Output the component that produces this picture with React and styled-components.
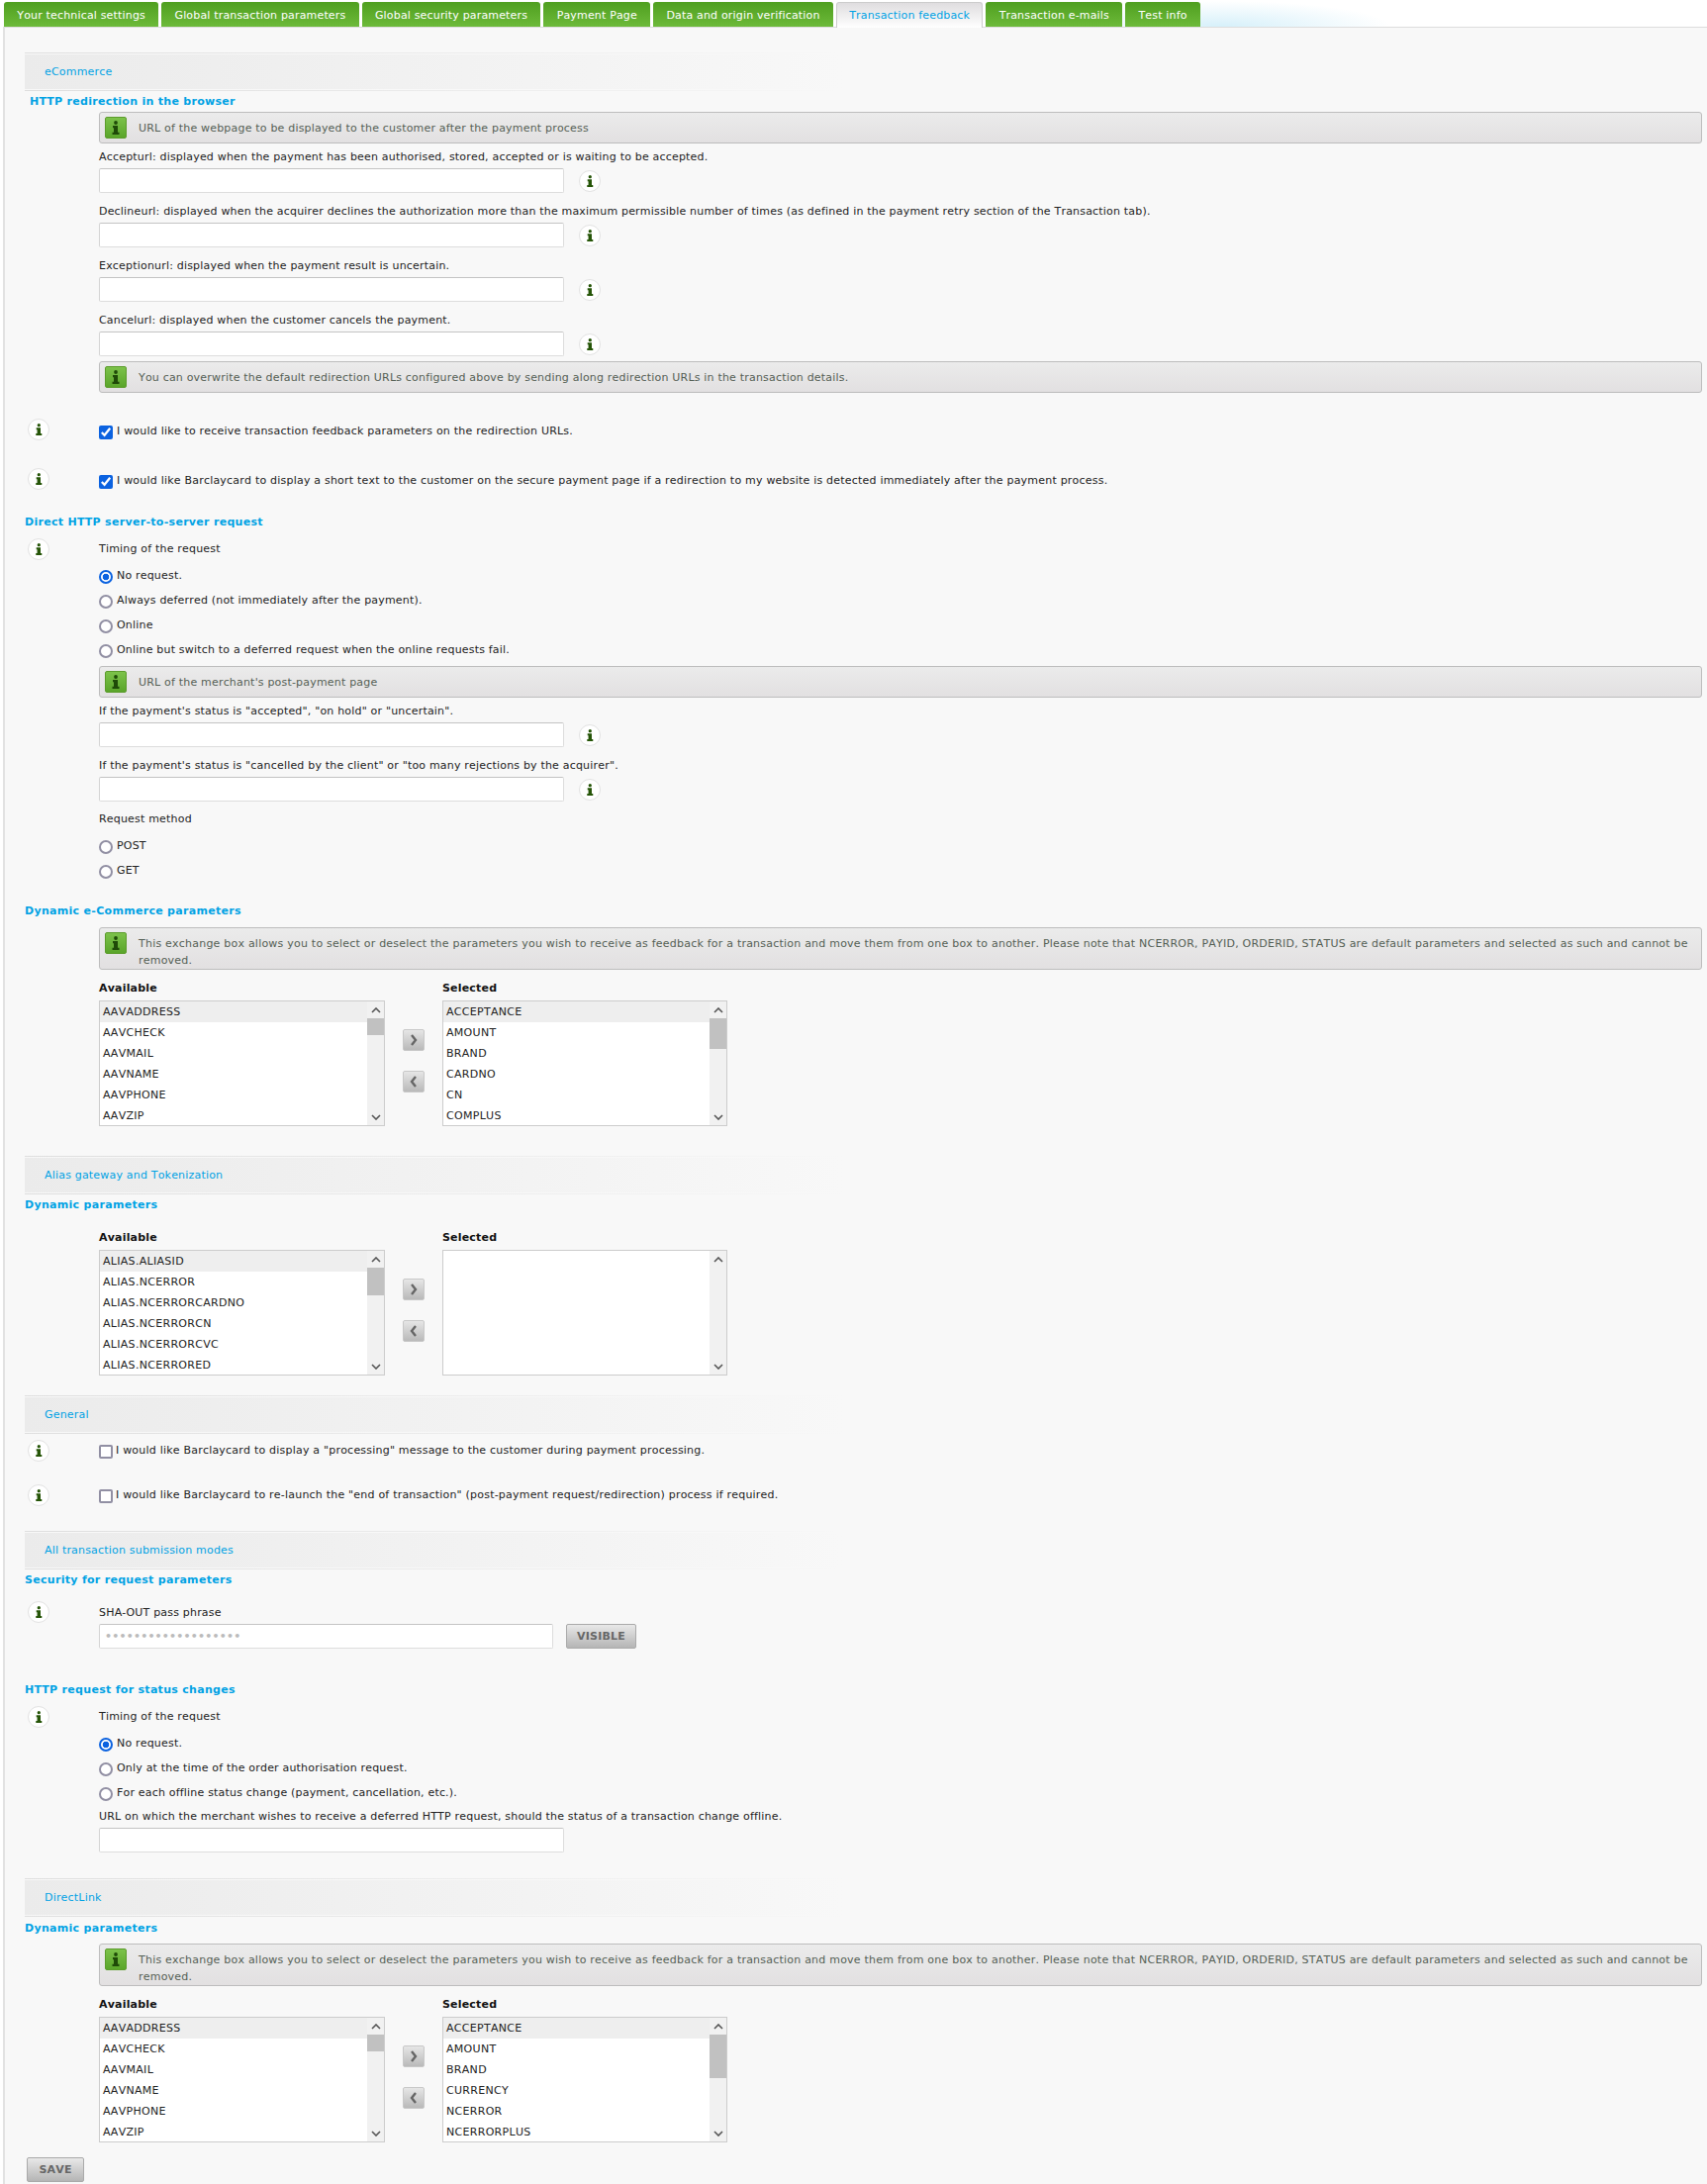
import React from "react";
import styled, { createGlobalStyle } from "styled-components";

const GlobalStyle = createGlobalStyle`
  body {
    margin: 0;
    background: #fff;
    font-family: "DejaVu Sans", Verdana, sans-serif;
    font-size: 11px;
    font-kerning: none;
    letter-spacing: 0.19px;
    color: #222;
  }
`;

const tabs = [
  "Your technical settings",
  "Global transaction parameters",
  "Global security parameters",
  "Payment Page",
  "Data and origin verification",
  "Transaction feedback",
  "Transaction e-mails",
  "Test info",
];

const available = ["AAVADDRESS", "AAVCHECK", "AAVMAIL", "AAVNAME", "AAVPHONE", "AAVZIP"];
const selectedOne = ["ACCEPTANCE", "AMOUNT", "BRAND", "CARDNO", "CN", "COMPLUS"];
const aliasAvailable = [
  "ALIAS.ALIASID",
  "ALIAS.NCERROR",
  "ALIAS.NCERRORCARDNO",
  "ALIAS.NCERRORCN",
  "ALIAS.NCERRORCVC",
  "ALIAS.NCERRORED",
];
const selectedLink = ["ACCEPTANCE", "AMOUNT", "BRAND", "CURRENCY", "NCERROR", "NCERRORPLUS"];

const exchangeNote =
  "This exchange box allows you to select or deselect the parameters you wish to receive as feedback for a transaction and move them from one box to another. Please note that NCERROR, PAYID, ORDERID, STATUS are default parameters and selected as such and cannot be removed.";

const InfoGlyph = ({ size = 14 }) => (
  <svg width={(size * 10) / 14} height={size} viewBox="0 0 10 14">
    <circle cx="5" cy="2" r="1.9" fill="currentColor" />
    <path d="M2 5h5v6.8h1.5V14h-7v-2.2H3V7.2H2z" fill="currentColor" />
  </svg>
);

const Dot = () => (
  <DotWrap>
    <InfoGlyph size={12} />
  </DotWrap>
);

const Notice = ({ wide, children }) => (
  <NoticeBox>
    <NoticeIcon>
      <InfoGlyph size={14} />
    </NoticeIcon>
    <NoticeText $wide={wide}>{children}</NoticeText>
  </NoticeBox>
);

const Field = ({ label }) => (
  <FieldWrap>
    <Label>{label}</Label>
    <FieldRow>
      <TextInput type="text" />
      <Dot />
    </FieldRow>
  </FieldWrap>
);

const CheckRow = ({ checked, top, compact, children }) => (
  <CheckWrap $top={top}>
    <Dot />
    <CheckLabel $compact={compact}>
      <CheckBox type="checkbox" defaultChecked={checked} $compact={compact} />
      <span>{children}</span>
    </CheckLabel>
  </CheckWrap>
);

const Radios = ({ name, options, first }) => (
  <RadioList>
    {options.map((o, i) => (
      <RadioLabel key={o}>
        <RadioButton type="radio" name={name} defaultChecked={first && i === 0} />
        <span>{o}</span>
      </RadioLabel>
    ))}
  </RadioList>
);

const Chevron = ({ dir }) => (
  <svg width="10" height="6" viewBox="0 0 10 6">
    <path
      d={dir === "up" ? "M1 5l4-4 4 4" : "M1 1l4 4 4-4"}
      fill="none"
      stroke="#555"
      strokeWidth="1.6"
    />
  </svg>
);

const ListBox = ({ items, thumb, width }) => (
  <List $width={width}>
    <Options>
      {items.map((o, i) => (
        <Option key={o} $first={i === 0}>
          {o}
        </Option>
      ))}
    </Options>
    <Scrollbar>
      <ScrollArrow>
        <Chevron dir="up" />
      </ScrollArrow>
      <ScrollTrack>{thumb > 0 && <ScrollThumb style={{ height: thumb }} />}</ScrollTrack>
      <ScrollArrow>
        <Chevron dir="down" />
      </ScrollArrow>
    </Scrollbar>
  </List>
);

const MoveButton = ({ points }) => (
  <Move>
    <svg width="10" height="14" viewBox="0 0 10 14">
      <path d={points} fill="none" stroke="#666" strokeWidth="2.4" />
    </svg>
  </Move>
);

const Exchange = ({ top, left, right, leftThumb, rightThumb }) => (
  <ExchangeWrap $top={top}>
    <ExchangeHeads>
      <ColumnTitle>Available</ColumnTitle>
      <ColumnTitle>Selected</ColumnTitle>
    </ExchangeHeads>
    <ExchangeBody>
      <ListBox items={left} thumb={leftThumb} width={289} />
      <MoveColumn>
        <MoveButton points="M3 2l4 5-4 5" />
        <MoveButton points="M7 2L3 7l4 5" />
      </MoveColumn>
      <ListBox items={right} thumb={rightThumb} width={288} />
    </ExchangeBody>
  </ExchangeWrap>
);

const App = () => {
  return (
    <>
      <GlobalStyle />
      <TabBar>
        {tabs.map((t) => (
          <Tab key={t} $active={t === "Transaction feedback"}>
            {t}
          </Tab>
        ))}
      </TabBar>
      <Panel>
        <SectionHead $top={25}>
          <SectionTitle>eCommerce</SectionTitle>
        </SectionHead>
        <Heading $top={4} $indent={5}>
          HTTP redirection in the browser
        </Heading>
        <Indented $top={3}>
          <Notice>URL of the webpage to be displayed to the customer after the payment process</Notice>
          <Field label="Accepturl: displayed when the payment has been authorised, stored, accepted or is waiting to be accepted." />
          <Field label="Declineurl: displayed when the acquirer declines the authorization more than the maximum permissible number of times (as defined in the payment retry section of the Transaction tab)." />
          <Field label="Exceptionurl: displayed when the payment result is uncertain." />
          <Field label="Cancelurl: displayed when the customer cancels the payment." />
          <Notice>
            You can overwrite the default redirection URLs configured above by sending along redirection URLs in the
            transaction details.
          </Notice>
        </Indented>
        <CheckRow checked top={26}>
          I would like to receive transaction feedback parameters on the redirection URLs.
        </CheckRow>
        <CheckRow checked top={27}>
          I would like Barclaycard to display a short text to the customer on the secure payment page if a redirection
          to my website is detected immediately after the payment process.
        </CheckRow>

        <Heading $top={25}>Direct HTTP server-to-server request</Heading>
        <DotRow $top={9}>
          <Dot />
          <DotContent>
            <Label>Timing of the request</Label>
            <Radios
              name="direct"
              first
              options={[
                "No request.",
                "Always deferred (not immediately after the payment).",
                "Online",
                "Online but switch to a deferred request when the online requests fail.",
              ]}
            />
            <Spaced $top={4}>
              <Notice>URL of the merchant's post-payment page</Notice>
            </Spaced>
            <Field label={`If the payment's status is "accepted", "on hold" or "uncertain".`} />
            <Field label={`If the payment's status is "cancelled by the client" or "too many rejections by the acquirer".`} />
            <Spaced $top={5}>
              <Label>Request method</Label>
            </Spaced>
            <Radios name="method" options={["POST", "GET"]} />
          </DotContent>
        </DotRow>

        <Heading $top={22}>Dynamic e-Commerce parameters</Heading>
        <Indented $top={9}>
          <Notice wide>{exchangeNote}</Notice>
        </Indented>
        <Exchange top={12} left={available} right={selectedOne} leftThumb={17} rightThumb={31} />

        <SectionHead $top={30}>
          <SectionTitle>Alias gateway and Tokenization</SectionTitle>
        </SectionHead>
        <Heading $top={4}>Dynamic parameters</Heading>
        <Exchange top={19} left={aliasAvailable} right={[]} leftThumb={28} rightThumb={0} />

        <SectionHead $top={20}>
          <SectionTitle>General</SectionTitle>
        </SectionHead>
        <CheckRow compact top={6}>
          I would like Barclaycard to display a "processing" message to the customer during payment processing.
        </CheckRow>
        <CheckRow compact top={22}>
          I would like Barclaycard to re-launch the "end of transaction" (post-payment request/redirection) process if
          required.
        </CheckRow>

        <SectionHead $top={24}>
          <SectionTitle>All transaction submission modes</SectionTitle>
        </SectionHead>
        <Heading $top={4}>Security for request parameters</Heading>
        <DotRow $top={14}>
          <Dot />
          <DotContent $pad={4}>
            <Label>SHA-OUT pass phrase</Label>
            <FieldRow>
              <PassInput type="password" defaultValue="0123456789012345678" />
              <GreyButton $left={13}>VISIBLE</GreyButton>
            </FieldRow>
          </DotContent>
        </DotRow>

        <Heading $top={35}>HTTP request for status changes</Heading>
        <DotRow $top={9}>
          <Dot />
          <DotContent>
            <Label>Timing of the request</Label>
            <Radios
              name="status"
              first
              options={[
                "No request.",
                "Only at the time of the order authorisation request.",
                "For each offline status change (payment, cancellation, etc.).",
              ]}
            />
            <Spaced $top={4}>
              <Label>URL on which the merchant wishes to receive a deferred HTTP request, should the status of a transaction change offline.</Label>
            </Spaced>
            <FieldRow>
              <TextInput type="text" />
            </FieldRow>
          </DotContent>
        </DotRow>

        <SectionHead $top={26}>
          <SectionTitle>DirectLink</SectionTitle>
        </SectionHead>
        <Heading $top={5}>Dynamic parameters</Heading>
        <Indented $top={8}>
          <Notice wide>{exchangeNote}</Notice>
        </Indented>
        <Exchange top={12} left={available} right={selectedLink} leftThumb={17} rightThumb={44} />

        <SaveRow>
          <GreyButton>SAVE</GreyButton>
        </SaveRow>
      </Panel>
    </>
  );
};

export default App;

const TabBar = styled.div`
  height: 25px;
  padding: 2px 0 0 4px;
  display: flex;
  gap: 3px;
  background: radial-gradient(ellipse 170px 26px at 1235px 100%, #d6f0fa, rgba(255, 255, 255, 0));
`;

const Tab = styled.div`
  height: 25px;
  box-sizing: border-box;
  padding: 0 13.25px;
  line-height: 28px;
  white-space: nowrap;
  letter-spacing: 0.17px;
  border-radius: 3px 3px 0 0;
  color: ${(p) => (p.$active ? "#00a2e4" : "#fff")};
  background: ${(p) =>
    p.$active ? "linear-gradient(#dfdddf, #fff)" : "linear-gradient(#4f9f1f, #6dba3a)"};
  ${(p) =>
    p.$active &&
    `
    border: 1px solid #ccc;
    border-bottom: none;
    height: 26px;
    padding: 0 12.25px;
    line-height: 26px;
    position: relative;
    z-index: 1;
  `}
`;

const Panel = styled.div`
  border-top: 1px solid #ddd;
  border-left: 2px solid #e2e2e2;
  margin-left: 3px;
  height: 2180px;
  box-sizing: border-box;
  padding: 0 5px 0 20px;
  background: #f8f8f8;
`;

const SectionHead = styled.div`
  margin-top: ${(p) => p.$top}px;
  width: 828px;
  padding: 1px 0;
  border-top: 1px solid;
  border-bottom: 1px solid;
  border-image: linear-gradient(90deg, #dedede, #f8f8f8) 1;
`;

const SectionTitle = styled.div`
  height: 35px;
  line-height: 35px;
  padding-left: 20px;
  color: #00a2e4;
  background: linear-gradient(90deg, #ebebeb, #f8f8f8);
`;

const Heading = styled.div`
  margin-top: ${(p) => p.$top}px;
  margin-left: ${(p) => p.$indent || 0}px;
  height: 14px;
  line-height: 14px;
  font-weight: bold;
  letter-spacing: 0.3px;
  color: #00a2e4;
`;

const Indented = styled.div`
  margin-top: ${(p) => p.$top}px;
  margin-left: 75px;
`;

const Spaced = styled.div`
  margin-top: ${(p) => p.$top}px;
`;

const NoticeBox = styled.div`
  box-sizing: border-box;
  min-height: 32px;
  display: flex;
  align-items: flex-start;
  padding: 4px 5px 0 5px;
  border: 1px solid #bdbdbd;
  border-radius: 3px;
  background: linear-gradient(#ebebeb, #e2e0e1);
`;

const NoticeIcon = styled.div`
  flex: none;
  width: 22px;
  height: 22px;
  display: flex;
  align-items: center;
  justify-content: center;
  box-sizing: border-box;
  border: 1px solid #5c9c2c;
  border-radius: 2px;
  color: #1f4a08;
  background: linear-gradient(#7cc24a, #5aa52a);
`;

const NoticeText = styled.div`
  margin-left: 12px;
  padding-top: 3px;
  line-height: 17px;
  letter-spacing: ${(p) => (p.$wide ? 0.22 : 0.19)}px;
  color: #556055;
`;

const FieldWrap = styled.div`
  padding: 6px 0 5px;
`;

const Label = styled.div`
  height: 14px;
  line-height: 15px;
  white-space: nowrap;
`;

const FieldRow = styled.div`
  margin-top: 5px;
  display: flex;
  align-items: center;
`;

const TextInput = styled.input`
  width: 470px;
  height: 25px;
  box-sizing: border-box;
  margin: 0;
  padding: 0 5px;
  background: #fff;
  border: 1px solid #ddd;
  border-top-color: #c4c4c4;
  border-left-color: #d4d4d4;
  border-radius: 2px;
  outline: none;
`;

const PassInput = styled(TextInput)`
  width: 459px;
  font-family: "DejaVu Sans", sans-serif;
  font-size: 11px;
  font-weight: bold;
  letter-spacing: 0.2px;
  color: #bbb;
`;

const DotWrap = styled.div`
  flex: none;
  width: 22px;
  height: 22px;
  margin-left: 15px;
  display: flex;
  align-items: center;
  justify-content: center;
  box-sizing: border-box;
  border: 1px solid #e2e2e2;
  border-radius: 50%;
  background: #fff;
  color: #265508;
`;

const CheckWrap = styled.div`
  margin-top: ${(p) => p.$top}px;
  height: 23px;
  display: flex;
  margin-left: -12px;
`;

const CheckLabel = styled.label`
  margin-left: 50px;
  display: flex;
  padding-top: ${(p) => (p.$compact ? 3 : 5)}px;
  line-height: 15px;
  letter-spacing: 0.21px;
  white-space: nowrap;
`;

const CheckBox = styled.input`
  flex: none;
  box-sizing: border-box;
  width: 14px;
  height: 14px;
  margin: 2px ${(p) => (p.$compact ? 3 : 4)}px 0 0;
  accent-color: #0b62e0;

  &:not(:checked) {
    appearance: none;
    background: #fff;
    border: 2px solid #918fa3;
    border-radius: 2px;
  }
`;

const DotRow = styled.div`
  margin-top: ${(p) => p.$top}px;
  margin-left: -12px;
  display: flex;
  align-items: flex-start;
`;

const DotContent = styled.div`
  flex: 1;
  min-width: 0;
  margin-left: 50px;
  padding-top: ${(p) => p.$pad || 3}px;
`;

const RadioList = styled.div`
  margin-top: 8px;
`;

const RadioLabel = styled.label`
  height: 25px;
  display: flex;
  align-items: center;
`;

const RadioButton = styled.input`
  appearance: none;
  flex: none;
  box-sizing: border-box;
  width: 14px;
  height: 14px;
  margin: 3px 4px 0 0;
  border: 2px solid #918fa3;
  border-radius: 50%;
  background: #fff;

  &:checked {
    border-color: #0b62e0;
    background: radial-gradient(circle, #0b62e0 0 3px, #fff 3.6px);
  }
`;

const ExchangeWrap = styled.div`
  margin-top: ${(p) => p.$top}px;
  margin-left: 75px;
`;

const ExchangeHeads = styled.div`
  display: flex;
  height: 14px;
  margin-bottom: 5px;
`;

const ColumnTitle = styled.div`
  width: 347px;
  line-height: 14px;
  font-weight: bold;
  color: #111;
`;

const ExchangeBody = styled.div`
  display: flex;
  align-items: stretch;
`;

const List = styled.div`
  box-sizing: border-box;
  width: ${(p) => p.$width}px;
  height: 127px;
  display: flex;
  border: 1px solid #ccc;
  background: #fff;
`;

const Options = styled.div`
  flex: 1;
  overflow: hidden;
`;

const Option = styled.div`
  height: 21px;
  line-height: 21px;
  padding-left: 3px;
  letter-spacing: 0.3px;
  background: ${(p) => (p.$first ? "#eeeeee" : "transparent")};
`;

const Scrollbar = styled.div`
  flex: none;
  width: 17px;
  display: flex;
  flex-direction: column;
  background: #f1f1f1;
`;

const ScrollArrow = styled.div`
  height: 17px;
  display: flex;
  align-items: center;
  justify-content: center;
`;

const ScrollTrack = styled.div`
  flex: 1;
`;

const ScrollThumb = styled.div`
  background: #c1c1c1;
`;

const MoveColumn = styled.div`
  width: 22px;
  margin: 0 18px;
  padding-bottom: 5px;
  display: flex;
  flex-direction: column;
  justify-content: center;
  gap: 20px;
`;

const Move = styled.div`
  width: 22px;
  height: 22px;
  box-sizing: border-box;
  display: flex;
  align-items: center;
  justify-content: center;
  border: 1px solid #c8c8c8;
  border-radius: 2px;
  background: linear-gradient(#e6e6e6, #b9b9b9);
`;

const GreyButton = styled.div`
  margin-left: ${(p) => p.$left || 0}px;
  width: ${(p) => (p.$left ? 71 : 58)}px;
  height: 25px;
  box-sizing: border-box;
  display: flex;
  align-items: center;
  justify-content: center;
  font-weight: bold;
  color: #666;
  border: 1px solid #aaa;
  border-radius: 2px;
  background: linear-gradient(#e8e8e8, #b5b5b5);
`;

const SaveRow = styled.div`
  margin: 15px 0 0 2px;
`;
